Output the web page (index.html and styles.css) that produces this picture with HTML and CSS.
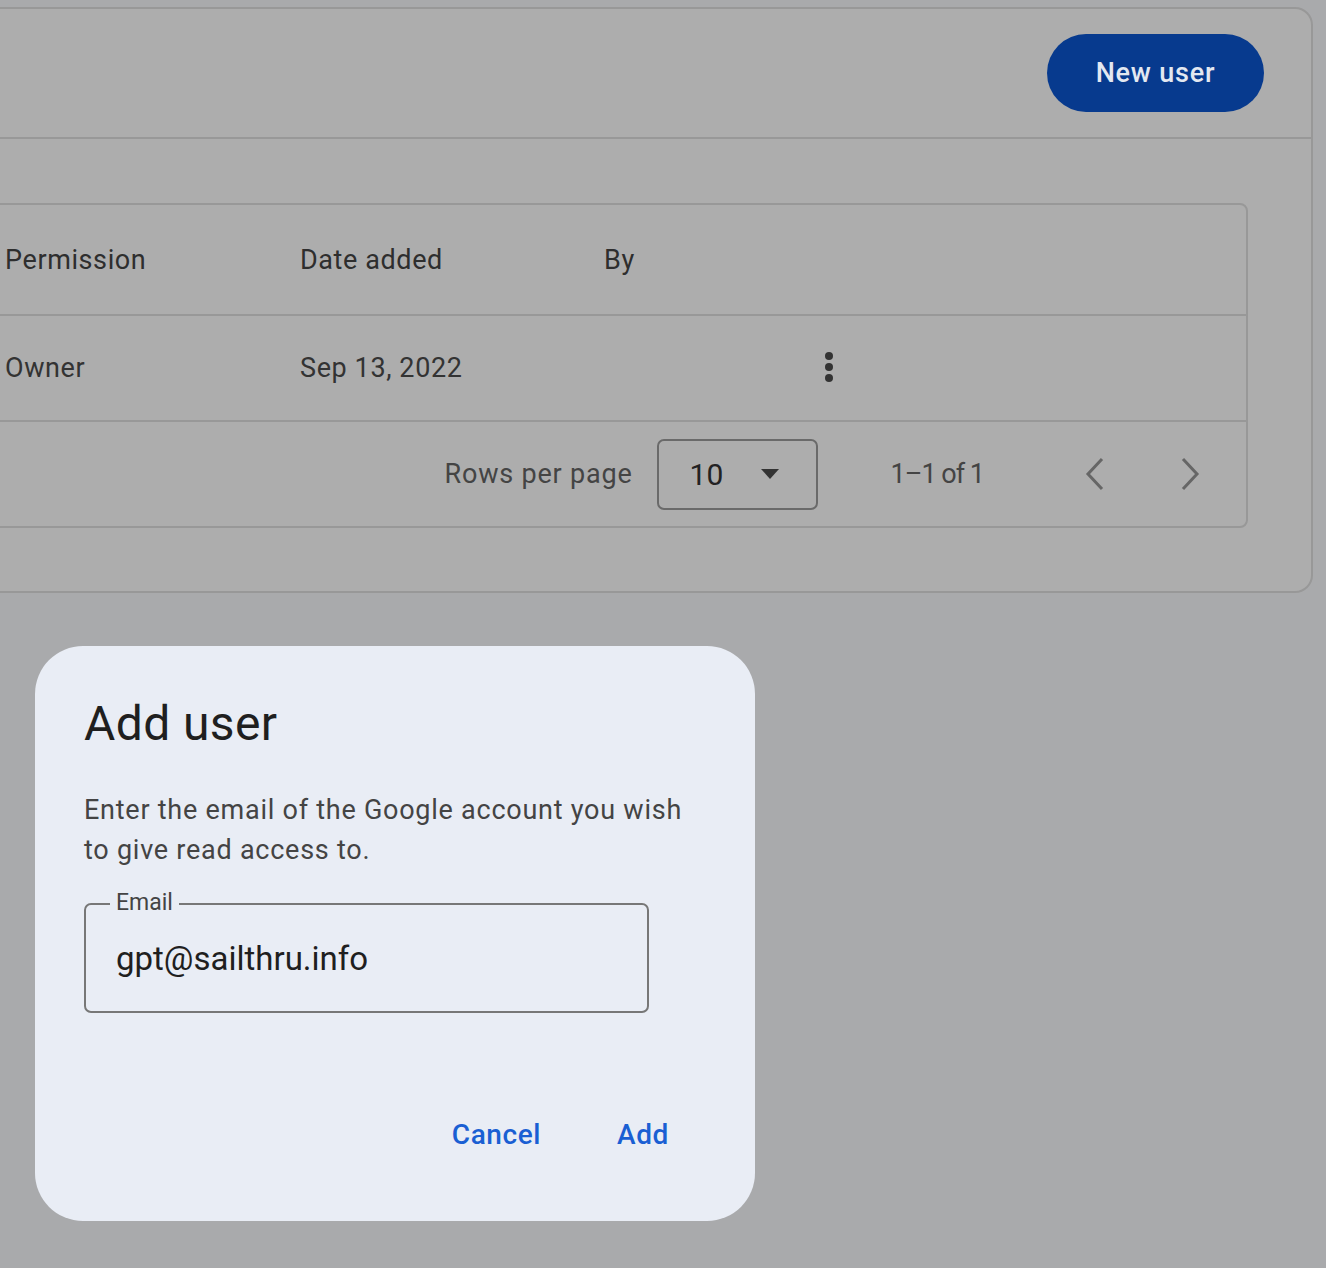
FILE: index.html
```html
<!DOCTYPE html>
<html lang="en">
<head>
<meta charset="utf-8">
<title>Users</title>
<link rel="stylesheet" href="styles.css">
</head>
<body>
<section class="card">
  <header class="card-header">
    <button class="btn-primary" type="button">New user</button>
  </header>
  <div class="card-body">
    <div class="table">
      <div class="row row-head">
        <span class="cell"></span>
        <span class="cell">Permission</span>
        <span class="cell">Date added</span>
        <span class="cell">By</span>
        <span class="cell"></span>
      </div>
      <div class="row row-data">
        <span class="cell"></span>
        <span class="cell">Owner</span>
        <span class="cell">Sep 13, 2022</span>
        <span class="cell"></span>
        <span class="cell cell-action">
          <svg class="kebab" width="24" height="36" viewBox="0 0 24 36" aria-hidden="true">
            <circle cx="12" cy="6" r="4"/>
            <circle cx="12" cy="17" r="4"/>
            <circle cx="12" cy="28" r="4"/>
          </svg>
        </span>
      </div>
      <div class="table-footer">
        <span class="rpp-label">Rows per page</span>
        <div class="select">
          <span class="select-value">10</span>
          <svg class="select-arrow" width="20" height="10" viewBox="0 0 20 10" aria-hidden="true"><path d="M1 0 L19 0 L10 10 Z"/></svg>
        </div>
        <span class="range">1–1 of 1</span>
        <button class="icon-btn" type="button" aria-label="Previous page">
          <svg width="24" height="34" viewBox="0 0 24 34" aria-hidden="true"><path d="M19 2 L5 17 L19 32"/></svg>
        </button>
        <button class="icon-btn" type="button" aria-label="Next page">
          <svg width="24" height="34" viewBox="0 0 24 34" aria-hidden="true"><path d="M5 2 L19 17 L5 32"/></svg>
        </button>
      </div>
    </div>
  </div>
</section>

<div class="dialog" role="dialog" aria-labelledby="dlg-title">
  <h2 class="dialog-title" id="dlg-title">Add user</h2>
  <p class="dialog-text">Enter the email of the Google account you wish to give read access to.</p>
  <div class="field">
    <span class="field-label">Email</span>
    <span class="field-value">gpt@sailthru.info</span>
  </div>
  <div class="dialog-actions">
    <button class="btn-text" type="button">Cancel</button>
    <button class="btn-text" type="button">Add</button>
  </div>
</div>
</body>
</html>
```

FILE: styles.css
```css
html, body {
  margin: 0;
  padding: 0;
}
body {
  background: #a9aaac;
  font-family: Roboto, "Noto Sans", "Liberation Sans", sans-serif;
  color: #333;
  width: 1326px;
  height: 1268px;
  overflow: hidden;
}
button {
  font-family: inherit;
  border: 0;
  background: none;
  padding: 0;
  cursor: pointer;
}

.card {
  margin: 7px 13px 0 -120px;
  border: 2px solid #989898;
  border-radius: 18px;
  background: #adadad;
}
.card-header {
  height: 128px;
  display: flex;
  align-items: center;
  justify-content: flex-end;
  padding-right: 47px;
  border-bottom: 2px solid #989898;
}
.btn-primary {
  width: 217px;
  height: 78px;
  border-radius: 39px;
  background: #073a8e;
  color: #e3e8f1;
  font-size: 27px;
  font-weight: 500;
  letter-spacing: 0.8px;
}
.card-body {
  padding: 64px 63px 63px 0;
}
.table {
  border: 2px solid #989898;
  border-radius: 8px;
}
.row {
  display: grid;
  grid-template-columns: 121px 295px 304px 201px 48px 1fr;
  align-items: center;
  border-bottom: 2px solid #989898;
  font-size: 27px;
  letter-spacing: 0.6px;
  color: #333;
}
.row-head {
  height: 109px;
  color: #2e2e2e;
}
.row-data {
  height: 104px;
}
.cell-action {
  display: flex;
  justify-content: center;
}
.kebab {
  fill: #333;
}
.table-footer {
  height: 104px;
  display: flex;
  align-items: center;
  justify-content: flex-end;
  padding-right: 32px;
  font-size: 27px;
  color: #444;
}
.rpp-label {
  margin-right: 24px;
  letter-spacing: 0.8px;
}
.select {
  width: 161px;
  height: 71px;
  box-sizing: border-box;
  border: 2px solid #6a6a6a;
  border-radius: 7px;
  display: flex;
  align-items: center;
  padding: 0 36px 0 31px;
  justify-content: space-between;
  margin-right: 73px;
}
.select-value {
  font-size: 30px;
  color: #222;
}
.select-arrow {
  fill: #333;
}
.range {
  margin-right: 87px;
  letter-spacing: -1px;
}
.icon-btn {
  width: 48px;
  height: 48px;
  display: flex;
  align-items: center;
  justify-content: center;
}
.icon-btn + .icon-btn {
  margin-left: 47px;
}
.icon-btn svg path {
  fill: none;
  stroke: #666;
  stroke-width: 3;
}

.dialog {
  margin: 53px 0 0 35px;
  width: 720px;
  height: 575px;
  box-sizing: border-box;
  background: #e9edf5;
  border-radius: 48px;
  padding: 48px 40px 0 49px;
  display: flex;
  flex-direction: column;
}
.dialog-title {
  margin: 0;
  font-size: 48px;
  line-height: 60px;
  font-weight: 400;
  letter-spacing: 0.4px;
  color: #1f1f1f;
}
.dialog-text {
  margin: 36px 0 0;
  width: 610px;
  font-size: 27px;
  line-height: 40px;
  letter-spacing: 0.75px;
  color: #444;
}
.field {
  position: relative;
  margin-top: 33px;
  width: 565px;
  height: 110px;
  box-sizing: border-box;
  border: 2px solid #777;
  border-radius: 7px;
  display: flex;
  align-items: center;
  padding: 0 30px;
}
.field-label {
  position: absolute;
  top: -16px;
  left: 24px;
  padding: 0 6px;
  font-size: 23px;
  line-height: 28px;
  color: #444;
  background: #e9edf5;
}
.field-value {
  font-size: 33px;
  color: #1f1f1f;
}
.dialog-actions {
  margin-top: auto;
  margin-bottom: 70px;
  padding-right: 46px;
  display: flex;
  justify-content: flex-end;
  gap: 76px;
}
.btn-text {
  font-size: 28px;
  font-weight: 500;
  letter-spacing: 0.6px;
  color: #1a5fd3;
}
```
